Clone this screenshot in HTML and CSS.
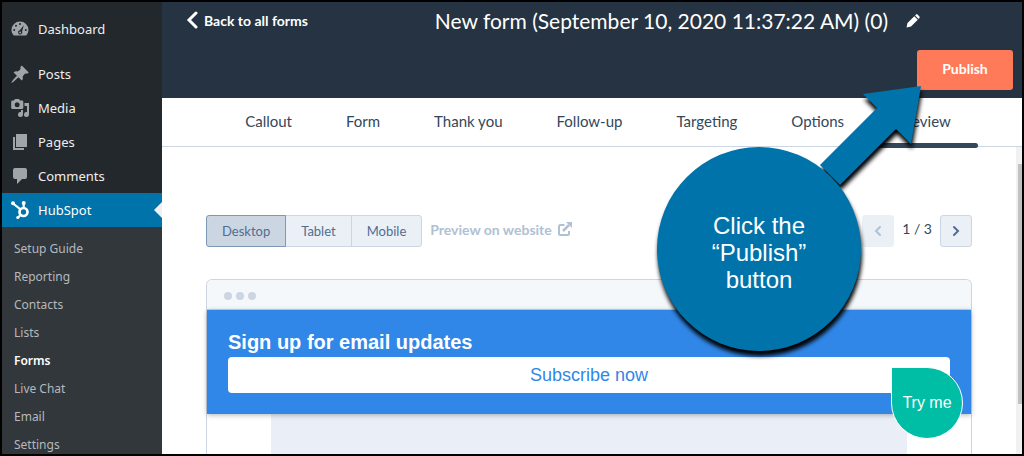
FILE: index.html
```html
<!DOCTYPE html>
<html lang="en">
<head>
  <meta charset="UTF-8">
  <meta name="viewport" content="width=device-width, initial-scale=1.0">
  <title>HubSpot Forms</title>
  <link rel="stylesheet" href="styles.css">
</head>
<body>

  <div class="app">
    <!-- Admin Menu -->
    <nav class="sidebar">
      <a class="menu-item dashboard" href="#">
        <svg class="menu-icon" viewBox="0 0 20 20"><path fill-rule="evenodd" d="M3.800 16.500h12.400A8.500 8.500 0 0 0 18.500 11a8.500 8.500 0 0 0-17 0c0 2.200.9 4.100 2.300 5.500zM10 4a1 1 0 1 1 0 2 1 1 0 0 1 0-2zM6 5.800a1 1 0 1 1 0 2 1 1 0 0 1 0-2zM4.200 10a1 1 0 1 1 0 2 1 1 0 0 1 0-2zM15.800 10a1 1 0 1 1 0 2 1 1 0 0 1 0-2zM13.800 6.300l-1.700 6.200a2.100 2.100 0 1 1-2.300-1.200zM10.100 12.600a.9.9 0 1 0 0 1.800.9.9 0 0 0 0-1.800z"/></svg>
        Dashboard
      </a>
      <a class="menu-item" href="#">
        <svg class="menu-icon" viewBox="0 0 20 20"><path d="M10.400 3l1.400-1.500 6.900 6.900-1.500 1.400c-.8-.4-1.700-.3-2.500.2l-2.100 2.400c.5 1.400.4 2.900-.8 4.200l-3.400-3.400C6 15.600 3.200 18.400 1.200 19c.5-2 3.400-4.900 5.800-7.300L3.600 8.400c1.200-1.200 2.800-1.400 4.200-.8l2.400-2.100c.5-.8.600-1.700.2-2.500z"/></svg>
        Posts
      </a>
      <a class="menu-item" href="#">
        <svg class="menu-icon" viewBox="0 0 20 20"><path fill-rule="evenodd" d="M2.500 2.500H4L5 1h4l1 1.500h2a1.300 1.300 0 0 1 1.300 1.300v6A1.300 1.300 0 0 1 12 11.100H2.500A1.300 1.300 0 0 1 1.200 9.800v-6a1.300 1.300 0 0 1 1.300-1.300zM7.200 4.300a2.500 2.500 0 1 0 0 5 2.500 2.500 0 0 0 0-5z"/><path d="M14.500 5H19v11.500a2.500 2.500 0 1 1-2-2.450V8h-2.500zM13 12v4.500a2.500 2.500 0 1 1-2-2.450V12z"/></svg>
        Media
      </a>
      <a class="menu-item" href="#">
        <svg class="menu-icon" viewBox="0 0 20 20"><path d="M6 2h11v13H6z"/><path d="M3 5h2v11h9v2H3z"/></svg>
        Pages
      </a>
      <a class="menu-item" href="#">
        <svg class="menu-icon" viewBox="0 0 20 20"><path d="M5 2h10a2 2 0 0 1 2 2v7a2 2 0 0 1-2 2h-3l-5 5v-5H5a2 2 0 0 1-2-2V4a2 2 0 0 1 2-2z"/></svg>
        Comments
      </a>
      <a class="menu-item current" href="#">
        <svg class="menu-icon" viewBox="0 0 20 20"><g fill="none" stroke="#fff"><circle cx="13.500" cy="12" r="4" stroke-width="2.700"/><path d="M3 3.500l7.500 5.800M13.700 3v5M10.800 14.700L8 17.500" stroke-width="2.200"/></g><g fill="#fff"><circle cx="3" cy="3.300" r="2"/><circle cx="13.700" cy="3" r="2"/><circle cx="7.800" cy="17.500" r="1.600"/></g></svg>
        HubSpot
      </a>
      <ul class="submenu">
        <li><a href="#">Setup Guide</a></li>
        <li><a href="#">Reporting</a></li>
        <li><a href="#">Contacts</a></li>
        <li><a href="#">Lists</a></li>
        <li><a class="selected" href="#">Forms</a></li>
        <li><a href="#">Live Chat</a></li>
        <li><a href="#">Email</a></li>
        <li><a href="#">Settings</a></li>
      </ul>
    </nav>

    <main class="editor">
      <!-- Header -->
      <header class="header">
        <a class="back" href="#">
          <svg width="12" height="18" viewBox="0 0 12 18"><path d="M10 2L3 9l7 7" fill="none" stroke="#fff" stroke-width="3" stroke-linecap="round"/></svg>
          Back to all forms
        </a>
        <div class="title">
          <h1>New form (September 10, 2020 11:37:22 AM) (0)</h1>
          <button class="edit" aria-label="Edit name">
            <svg width="14" height="14" viewBox="0 0 14 14"><path fill="#fff" d="M0.500 13.500l1-4.500L8.300 2.200l3.500 3.500L5 12.500zM9.100 1.400L10 .6c.5-.5 1.100-.5 1.600 0l1.800 1.800c.5.500.5 1.100 0 1.600l-.8.900z"/></svg>
          </button>
        </div>
        <button class="publish">Publish</button>
      </header>

      <!-- Steps -->
      <nav class="tabs">
        <a href="#">Callout</a>
        <a href="#">Form</a>
        <a href="#">Thank you</a>
        <a href="#">Follow-up</a>
        <a href="#">Targeting</a>
        <a href="#">Options</a>
        <a class="active" href="#">Preview</a>
      </nav>

      <div class="body">
        <section class="preview">
          <div class="toolbar">
            <div class="devices">
              <button class="pressed">Desktop</button>
              <button>Tablet</button>
              <button>Mobile</button>
            </div>
            <a class="website" href="#">
              Preview on website
              <svg width="14" height="14" viewBox="0 0 14 14" fill="none" stroke="#b0c1d4" stroke-width="2"><path d="M6.500 3H2.500Q1 3 1 4.500v7Q1 13 2.500 13h7q1.500 0 1.500-1.500V9"/><path d="M5 9l6-6" stroke-width="2.500"/><path d="M8 0h6v6z" fill="#b0c1d4" stroke="none"/></svg>
            </a>
            <div class="pager">
              <button aria-label="Previous" disabled>
                <svg width="8" height="12" viewBox="0 0 8 12"><path d="M6 2L2 6l4 4" fill="none" stroke="#b0c1d4" stroke-width="2" stroke-linecap="round"/></svg>
              </button>
              <span>1 / 3</span>
              <button aria-label="Next">
                <svg width="8" height="12" viewBox="0 0 8 12"><path d="M2 2l4 4-4 4" fill="none" stroke="#506e91" stroke-width="2" stroke-linecap="round"/></svg>
              </button>
            </div>
          </div>

          <div class="browser">
            <div class="browser-bar"><i></i><i></i><i></i></div>
            <div class="banner">
              <h2>Sign up for email updates</h2>
              <button class="subscribe">Subscribe now</button>
            </div>
            <div class="page"></div>
            <button class="try-me">Try me</button>
          </div>
        </section>
        <div class="scrollbar"><div class="thumb"></div></div>
      </div>

      <!-- Callout bubble over the page -->
      <div class="callout">
        <svg class="callout-shape" width="280" height="280" viewBox="0 0 280 280">
          <path fill="#0073aa" d="M267 6l-10 58-15-15-56 56-20-20 57-57-14-14z"/>
          <circle cx="105" cy="169" r="102" fill="#0073aa"/>
        </svg>
        <p>Click the<br>“Publish”<br>button</p>
      </div>
    </main>
  </div>

</body>
</html>
```
FILE: styles.css
```css
/* General Styles */
* {
  box-sizing: border-box;
}

body {
  margin: 0;
  font-family: Lato, sans-serif;
  color: #33475b;
}

a {
  color: inherit;
  text-decoration: none;
}

button {
  font-family: inherit;
  padding: 0;
  cursor: pointer;
}

.app {
  display: flex;
  height: 100vh;
  border: 2px solid #000;
  overflow: hidden;
}

/* Admin Menu */
.sidebar {
  flex: 0 0 160px;
  padding-top: 10px;
  background: #23282d;
  font-family: "Noto Sans", sans-serif;
}

.menu-item {
  position: relative;
  display: flex;
  align-items: center;
  gap: 8px;
  height: 34px;
  padding-left: 8px;
  color: #eee;
  font-size: 13px;
}

.menu-item.dashboard {
  margin-bottom: 11px;
}

.menu-icon {
  width: 20px;
  height: 20px;
  fill: #a0a5aa;
}

.menu-item.current {
  background: #0073aa;
  color: #fff;
}

.menu-item.current::after {
  content: "";
  position: absolute;
  right: 0;
  border: 8px solid transparent;
  border-right-color: #f1f1f1;
}

.submenu {
  height: 100%;
  margin: 0;
  padding: 8px 12px;
  list-style: none;
  background: #32373c;
  color: #b4b9be;
  font-size: 12px;
  line-height: 28px;
}

.submenu a {
  display: block;
}

.submenu .selected {
  color: #fff;
  font-weight: 600;
}

/* Editor */
.editor {
  position: relative;
  flex: 1;
  display: flex;
  flex-direction: column;
  min-width: 0;
  background: #fff;
}

.header {
  display: grid;
  grid-template-columns: 1fr auto;
  align-items: start;
  padding: 5px 9px 8px 24px;
  background: #253342;
  color: #fff;
}

.back {
  display: flex;
  align-items: center;
  gap: 6px;
  height: 26px;
  font-size: 14px;
  font-weight: 700;
}

.title {
  display: flex;
  align-items: center;
  gap: 18px;
  height: 28px;
  margin-right: 93px;
}

.title h1 {
  margin: 0;
  font-size: 21px;
  font-weight: 400;
  line-height: 28px;
}

.edit {
  display: flex;
  border: none;
  background: none;
}

.publish {
  grid-column: 2;
  justify-self: end;
  width: 96px;
  height: 40px;
  margin-top: 15px;
  padding-bottom: 4px;
  border: none;
  border-radius: 3px;
  background: #ff7a59;
  color: #fff;
  font-size: 14px;
  font-weight: 700;
}

/* Steps */
.tabs {
  display: flex;
  justify-content: center;
  height: 49px;
  padding-left: 12px;
  border-bottom: 1px solid #cbd6e2;
  font-size: 15px;
  line-height: 46px;
}

.tabs a {
  position: relative;
  padding: 0 27px;
}

.tabs .active::after {
  content: "";
  position: absolute;
  left: 0;
  right: 0;
  bottom: -2px;
  height: 5px;
  border-radius: 3px;
  background: #33475b;
}

/* Preview */
.body {
  display: flex;
  flex: 1;
  min-height: 0;
}

.preview {
  flex: 1;
  display: flex;
  flex-direction: column;
  gap: 32px;
  padding: 68px 44px 0;
}

.toolbar {
  display: flex;
  gap: 8px;
}

.devices {
  display: flex;
}

.devices button {
  height: 32px;
  margin-left: -1px;
  padding: 0 15px;
  border: 1px solid #cbd6e2;
  background: #eaf0f6;
  color: #506e91;
  font-size: 13px;
}

.devices button:first-child {
  margin-left: 0;
  border-radius: 3px 0 0 3px;
}

.devices button:last-child {
  border-radius: 0 3px 3px 0;
}

.devices .pressed {
  z-index: 1;
  border-color: #7c98b6;
  background: #cbd6e2;
}

.website {
  display: flex;
  align-items: center;
  gap: 6px;
  height: 28px;
  color: #b0c1d4;
  font-size: 14px;
  font-weight: 700;
}

.pager {
  display: flex;
  gap: 8px;
  margin-left: auto;
  font-size: 14px;
  line-height: 28px;
}

.pager button {
  display: flex;
  align-items: center;
  justify-content: center;
  width: 32px;
  height: 32px;
  border: 1px solid #cbd6e2;
  border-radius: 3px;
  background: #eaf0f6;
}

.pager button:disabled {
  border-color: #eaf0f6;
}

.browser {
  position: relative;
  flex: 1;
  border: 1px solid #cbd6e2;
  border-bottom: none;
  border-radius: 6px 6px 0 0;
}

.browser-bar {
  display: flex;
  align-items: center;
  gap: 4px;
  height: 30px;
  padding: 2px 17px 0;
  border-bottom: 1px solid #cbd6e2;
  border-radius: 5px 5px 0 0;
  background: #f5f8fa;
}

.browser-bar i {
  width: 8px;
  height: 8px;
  border-radius: 50%;
  background: #cbd6e2;
}

.banner {
  position: relative;
  padding: 20px 21px 21px;
  background: #3087e8;
  box-shadow: 0 1px 5px rgba(0, 0, 0, 0.3);
  font-family: "Liberation Sans", sans-serif;
}

.banner h2 {
  margin: 0 0 3px;
  color: #fff;
  font-size: 20px;
  line-height: 24px;
}

.subscribe {
  display: block;
  width: 100%;
  height: 36px;
  border: none;
  border-radius: 4px;
  background: #fff;
  color: #3087e8;
  font-size: 18px;
}

.page {
  height: 100px;
  margin: 0 64px;
  background: #eaeef6;
}

.try-me {
  position: absolute;
  top: 87px;
  right: 8px;
  width: 72px;
  height: 72px;
  border: 1px solid #fff;
  border-radius: 0 50% 50% 50%;
  background: #00bda5;
  color: #fff;
  font-family: "Liberation Sans", sans-serif;
  font-size: 16px;
}

.scrollbar {
  width: 6px;
  padding: 17px 0 0 2px;
  background: #f1f1f1;
}

.thumb {
  height: 240px;
  background: #c1c1c1;
}

/* Callout */
.callout {
  position: absolute;
  top: 78px;
  right: 88px;
  width: 280px;
  height: 280px;
}

.callout-shape {
  filter: drop-shadow(1px 5px 2px #000);
}

.callout p {
  position: absolute;
  top: 132px;
  left: 3px;
  width: 204px;
  margin: 0;
  color: #fff;
  font-family: "Liberation Sans", sans-serif;
  font-size: 24px;
  line-height: 27px;
  text-align: center;
}
```
